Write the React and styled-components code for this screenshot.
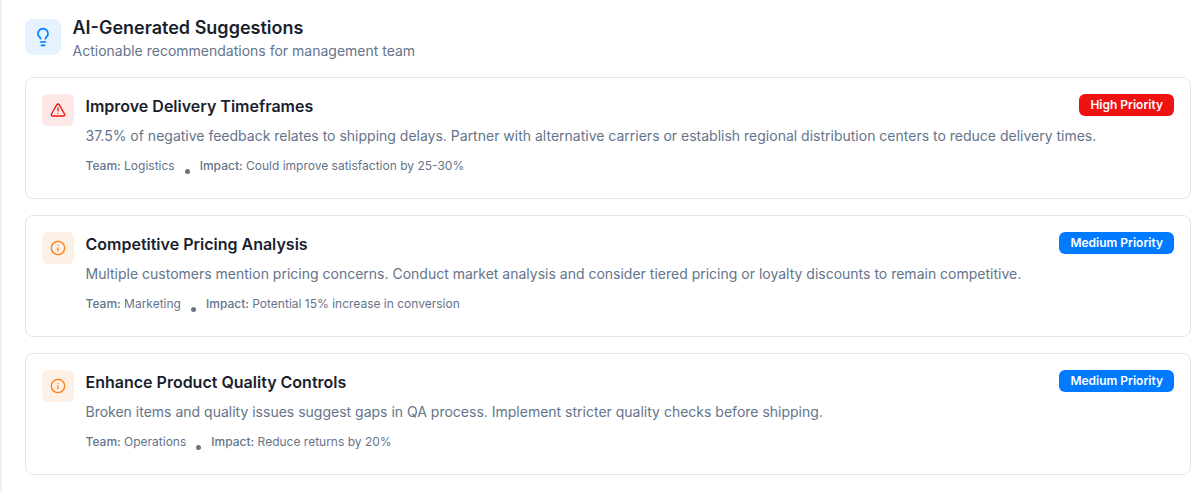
import React from "react";
import styled, { createGlobalStyle } from "styled-components";
import { Lightbulb, TriangleAlert, Info } from "lucide-react";

const Global = createGlobalStyle`
  html, body { margin: 0; padding: 0; background: #fff; overflow: hidden; }
  * { box-sizing: border-box; }
  body { font-family: Inter, "Liberation Sans", sans-serif; }
`;

const Panel = styled.section`
  width: 1216px;
  height: 492px;
  padding: 19px 25px 0 23px;
  border-left: 2px solid #efefef;
  background: #fff;
`;

const Header = styled.header`
  display: flex;
  align-items: flex-start;
  gap: 11.5px;
  width: 1166px;
  margin-bottom: 16px;
`;

const HeaderIcon = styled.div`
  width: 36px;
  height: 36px;
  border-radius: 8px;
  background: #e6f2ff;
  color: #007bff;
  display: flex;
  align-items: center;
  justify-content: center;
  flex: none;
`;

const HeaderTitle = styled.h2`
  margin: 0 0 4px;
  font-size: 18px;
  line-height: 18px;
  font-weight: 600;
  color: #1a1f2e;
`;

const HeaderSub = styled.p`
  margin: 0;
  font-size: 14px;
  line-height: 20px;
  color: #64748b;
`;

const List = styled.div`
  display: flex;
  flex-direction: column;
  gap: 16px;
  width: 1166px;
`;

const Card = styled.article`
  display: flex;
  gap: 11.5px;
  height: 122px;
  padding: 16px;
  border: 1px solid #e5e5e5;
  border-radius: 8px;
  background: #fff;
`;

const CardIcon = styled.div`
  width: 32px;
  height: 32px;
  border-radius: 6px;
  display: flex;
  align-items: center;
  justify-content: center;
  flex: none;
  background: ${(p) => (p.$tone === "red" ? "#fde7e7" : "#fff0e6")};
  color: ${(p) => (p.$tone === "red" ? "#ee1212" : "#fd7e14")};
`;

const CardBody = styled.div`
  flex: 1;
  min-width: 0;
`;

const CardTop = styled.div`
  display: flex;
  justify-content: space-between;
  align-items: flex-start;
  margin-bottom: 7px;
`;

const CardTitle = styled.h3`
  margin: 0;
  font-size: 16px;
  line-height: 24px;
  font-weight: 600;
  color: #1a1f2e;
`;

const Badge = styled.span`
  height: 22px;
  padding: 0 11px 1px;
  border-radius: 6px;
  display: inline-flex;
  align-items: center;
  font-size: 12px;
  font-weight: 600;
  line-height: 18px;
  color: #fff;
  background: ${(p) => (p.$tone === "red" ? "#ee1212" : "#007bff")};
`;

const Desc = styled.p`
  margin: 0 0 11px;
  font-size: 14px;
  line-height: 21px;
  color: #64748b;
`;

const Meta = styled.div`
  display: flex;
  align-items: center;
  font-size: 12px;
  line-height: 18px;
  color: #64748b;
`;

const MetaLabel = styled.strong`
  font-weight: 500;
`;

const Dot = styled.span`
  width: 5px;
  height: 5px;
  border-radius: 50%;
  background: #6b7280;
  margin: 10px 10px 0;
  flex: none;
`;

const items = [
  { tone: "red", Icon: TriangleAlert, title: "Improve Delivery Timeframes", badge: "High Priority",
    desc: "37.5% of negative feedback relates to shipping delays. Partner with alternative carriers or establish regional distribution centers to reduce delivery times.",
    team: "Logistics", impact: "Could improve satisfaction by 25-30%" },
  { tone: "orange", Icon: Info, title: "Competitive Pricing Analysis", badge: "Medium Priority",
    desc: "Multiple customers mention pricing concerns. Conduct market analysis and consider tiered pricing or loyalty discounts to remain competitive.",
    team: "Marketing", impact: "Potential 15% increase in conversion" },
  { tone: "orange", Icon: Info, title: "Enhance Product Quality Controls", badge: "Medium Priority",
    desc: "Broken items and quality issues suggest gaps in QA process. Implement stricter quality checks before shipping.",
    team: "Operations", impact: "Reduce returns by 20%" },
];

export default function App() {
  return (
    <>
      <Global />
      <Panel>
        <Header>
          <HeaderIcon><Lightbulb size={20} strokeWidth={2} /></HeaderIcon>
          <div>
            <HeaderTitle>AI-Generated Suggestions</HeaderTitle>
            <HeaderSub>Actionable recommendations for management team</HeaderSub>
          </div>
        </Header>
        <List>
          {items.map(({ tone, Icon, title, badge, desc, team, impact }) => (
            <Card key={title}>
              <CardIcon $tone={tone}><Icon size={16} strokeWidth={2} /></CardIcon>
              <CardBody>
                <CardTop>
                  <CardTitle>{title}</CardTitle>
                  <Badge $tone={tone}>{badge}</Badge>
                </CardTop>
                <Desc>{desc}</Desc>
                <Meta>
                  <span><MetaLabel>Team:</MetaLabel> {team}</span>
                  <Dot />
                  <span><MetaLabel>Impact:</MetaLabel> {impact}</span>
                </Meta>
              </CardBody>
            </Card>
          ))}
        </List>
      </Panel>
    </>
  );
}
